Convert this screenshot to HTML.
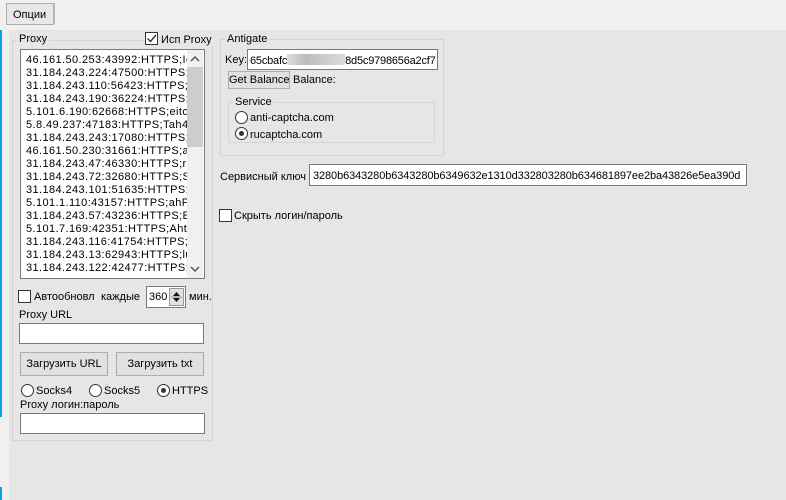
<!DOCTYPE html>
<html><head><meta charset="utf-8"><style>
*{box-sizing:border-box;margin:0;padding:0}
body{width:786px;height:500px;background:#e6e6e6;position:relative;overflow:hidden;font-family:"Liberation Sans",sans-serif;font-size:11px;color:#000}
.a{position:absolute;white-space:nowrap}
.top{left:0;top:0;width:786px;height:30px;background:#f0f0f0}
.strip{left:0;top:30px;width:9px;height:470px;background:#f0f0f0}
.blue{left:0;width:2px;background:#0a9fe6}
.grp{border:1px solid #d5d5d5}
.inp{background:#fff;border:1px solid #7a7a7a}
.btn{background:#e1e1e1;border:1px solid #adadad;text-align:center}
.lbl{background:#e6e6e6;padding:0 2px;white-space:nowrap}
.cb{width:13px;height:13px;border:1px solid #333;background:#fff}
.rb{width:13px;height:13px;border:1px solid #333;border-radius:50%;background:#fff}
.rb.on::after{content:"";position:absolute;left:3px;top:3px;width:5px;height:5px;border-radius:50%;background:#333}
.list div{height:13px;line-height:13px;white-space:nowrap;letter-spacing:0.4px;font-size:11px}
</style></head><body>
<div class="a top"></div>
<div class="a strip"></div>
<div class="a blue" style="top:30px;height:387px"></div>
<div class="a blue" style="top:487px;height:13px"></div>
<div class="a" style="left:54px;top:3px;width:1px;height:21px;background:#bbb"></div>
<div class="a" style="left:6px;top:3px;width:48px;height:22px;border:1px solid #adadad;background:#e8e8e8;padding:5px 0 0 6px">Опции</div>

<div class="a grp" style="left:12px;top:40px;width:201px;height:401px"></div>
<div class="a lbl" style="left:17px;top:33px">Proxy</div>
<div class="a lbl" style="left:145px;top:32px;padding-left:0"><span class="cb" style="display:inline-block;vertical-align:-2px;position:relative"><svg width="11" height="11" style="position:absolute;left:0;top:0"><path d="M1.5 5.5 L4.5 8.5 L10 2" stroke="#333" stroke-width="1.4" fill="none"/></svg></span> Исп Proxy</div>
<div class="a inp list" style="left:20px;top:49px;width:185px;height:230px;padding:4px 0 0 5px;overflow:hidden">
<div>46.161.50.253:43992:HTTPS;Ier</div>
<div>31.184.243.224:47500:HTTPS;a</div>
<div>31.184.243.110:56423:HTTPS;K</div>
<div>31.184.243.190:36224:HTTPS;D</div>
<div>5.101.6.190:62668:HTTPS;eitoh</div>
<div>5.8.49.237:47183:HTTPS;Tah4e</div>
<div>31.184.243.243:17080:HTTPS;u</div>
<div>46.161.50.230:31661:HTTPS;ah</div>
<div>31.184.243.47:46330:HTTPS;rul</div>
<div>31.184.243.72:32680:HTTPS;Se</div>
<div>31.184.243.101:51635:HTTPS;m</div>
<div>5.101.1.110:43157:HTTPS;ahPe</div>
<div>31.184.243.57:43236:HTTPS;Eib</div>
<div>5.101.7.169:42351:HTTPS;Aht5</div>
<div>31.184.243.116:41754:HTTPS;re</div>
<div>31.184.243.13:62943:HTTPS;lu2</div>
<div>31.184.243.122:42477:HTTPS;a</div>
</div>
<div class="a" style="left:187px;top:50px;width:16px;height:228px;background:#f0f0f0"></div>
<div class="a" style="left:187px;top:67px;width:16px;height:80px;background:#cdcdcd"></div>
<svg class="a" style="left:189px;top:55px" width="12" height="8"><path d="M2 6 L6 2 L10 6" stroke="#555" stroke-width="1.5" fill="none"/></svg>
<svg class="a" style="left:189px;top:265px" width="12" height="8"><path d="M2 2 L6 6 L10 2" stroke="#555" stroke-width="1.5" fill="none"/></svg>

<div class="a cb" style="left:18px;top:290px"></div>
<div class="a" style="left:34px;top:291px">Автообновл</div>
<div class="a" style="left:101px;top:291px">каждые</div>
<div class="a inp" style="left:146px;top:286px;width:40px;height:22px;padding:4px 0 0 2px">360</div>
<div class="a" style="left:169px;top:288px;width:15px;height:18px;background:#e1e1e1;border:1px solid #999"></div>
<svg class="a" style="left:170px;top:289px" width="13" height="16"><path d="M3 7 L6.5 3 L10 7Z M3 9 L6.5 13 L10 9Z" fill="#111"/><line x1="1" y1="8" x2="12" y2="8" stroke="#999"/></svg>
<div class="a" style="left:189px;top:291px">мин.</div>
<div class="a" style="left:19px;top:309px">Proxy URL</div>
<div class="a inp" style="left:19px;top:323px;width:185px;height:21px"></div>
<div class="a btn" style="left:20px;top:352px;width:88px;height:24px;line-height:22px">Загрузить URL</div>
<div class="a btn" style="left:116px;top:352px;width:88px;height:24px;line-height:22px">Загрузить txt</div>
<div class="a rb" style="left:21px;top:384px"></div>
<div class="a" style="left:36px;top:385px">Socks4</div>
<div class="a rb" style="left:89px;top:384px"></div>
<div class="a" style="left:104px;top:385px">Socks5</div>
<div class="a rb on" style="left:157px;top:384px"></div>
<div class="a" style="left:172px;top:385px">HTTPS</div>
<div class="a" style="left:20px;top:399px">Proxy логин:пароль</div>
<div class="a inp" style="left:20px;top:413px;width:185px;height:21px"></div>

<div class="a grp" style="left:220px;top:39px;width:224px;height:117px"></div>
<div class="a lbl" style="left:225px;top:33px">Antigate</div>
<div class="a" style="left:225px;top:54px">Key:</div>
<div class="a inp" style="left:247px;top:49px;width:191px;height:21px;padding:4px 0 0 2px;overflow:hidden;letter-spacing:-0.2px">65cbafc<span style="display:inline-block;width:58px;height:11px;background:linear-gradient(90deg,#ddd,#bbb,#ccc,#ddd);vertical-align:-1px"></span>8d5c9798656a2cf7</div>
<div class="a btn" style="left:228px;top:71px;width:62px;height:18px;line-height:16px">Get Balance</div>
<div class="a" style="left:293px;top:74px">Balance:</div>
<div class="a grp" style="left:228px;top:102px;width:207px;height:41px"></div>
<div class="a lbl" style="left:233px;top:96px">Service</div>
<div class="a rb" style="left:235px;top:111px"></div>
<div class="a" style="left:250px;top:112px">anti-captcha.com</div>
<div class="a rb on" style="left:235px;top:127px"></div>
<div class="a" style="left:250px;top:129px">rucaptcha.com</div>

<div class="a" style="left:220px;top:171px">Сервисный ключ</div>
<div class="a inp" style="left:309px;top:164px;width:438px;height:22px;padding:5px 0 0 3px;overflow:hidden;letter-spacing:-0.1px">3280b6343280b6343280b6349632e1310d332803280b634681897ee2ba43826e5ea390d</div>
<div class="a cb" style="left:219px;top:209px"></div>
<div class="a" style="left:234px;top:210px">Скрыть логин/пароль</div>
</body></html>
